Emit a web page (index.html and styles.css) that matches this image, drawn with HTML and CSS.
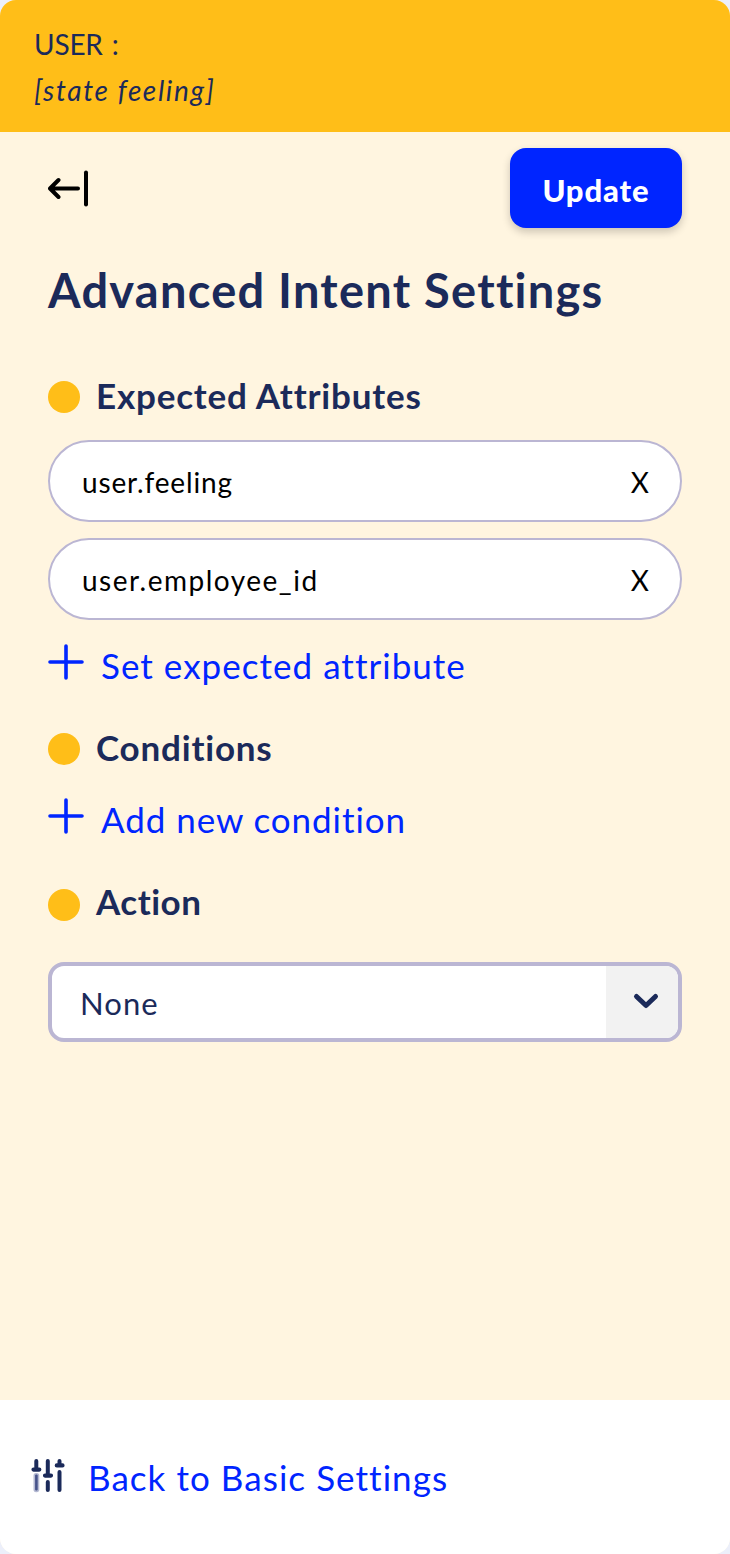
FILE: index.html
```html
<!DOCTYPE html>
<html lang="en">
<head>
<meta charset="utf-8">
<title>Advanced Intent Settings</title>
<link rel="stylesheet" href="styles.css">
</head>
<body>
<div class="panel">
  <header class="header">
    <div class="speaker">USER :</div>
    <div class="intent">[state feeling]</div>
  </header>
  <main class="main">
    <div class="toolbar">
      <svg class="back-icon" width="44" height="40" viewBox="0 0 44 40" fill="none" stroke="#000" stroke-width="4" stroke-linecap="round" stroke-linejoin="round"><path d="M30 20.5H2.5M10.5 12L2 20.5L10.5 29"/><path d="M38 4.5V36.5"/></svg>
      <button class="update">Update</button>
    </div>
    <h1 class="title">Advanced Intent Settings</h1>
    <h2 class="section attributes"><i class="dot"></i><span>Expected Attributes</span></h2>
    <div class="pills">
      <div class="pill"><span class="feeling">user.feeling</span><span>X</span></div>
      <div class="pill"><span class="employee">user.employee_id</span><span>X</span></div>
    </div>
    <a class="link set-link"><svg class="plus" width="36" height="36" viewBox="0 0 36 36" stroke="#0025ff" stroke-width="3.6" stroke-linecap="round"><path d="M18 2V34M2 18H34"/></svg><span>Set expected attribute</span></a>
    <h2 class="section conditions"><i class="dot"></i><span>Conditions</span></h2>
    <a class="link add-link"><svg class="plus" width="36" height="36" viewBox="0 0 36 36" stroke="#0025ff" stroke-width="3.6" stroke-linecap="round"><path d="M18 2V34M2 18H34"/></svg><span>Add new condition</span></a>
    <h2 class="section action"><i class="dot"></i><span>Action</span></h2>
    <div class="select">
      <span class="value">None</span>
      <span class="arrow"><svg width="28" height="20" viewBox="0 0 28 20" fill="none" stroke="#1b2a5a" stroke-width="5" stroke-linecap="round" stroke-linejoin="round"><path d="M4.5 4.5L14 13.5L23.5 4.5"/></svg></span>
    </div>
  </main>
  <footer class="footer">
    <svg class="sliders" width="34" height="36" viewBox="0 0 34 36" fill="none" stroke="#1b2a5a" stroke-width="4" stroke-linecap="round"><path d="M5.3 3V11M16.8 3V16M28.5 3V7M16.8 24V32M28.5 14V32"/><path d="M2.5 11.6H8.3M14 17.6H20M25.8 7.4H31.5" stroke-width="4.2"/><rect x="3.3" y="15.8" width="4.2" height="17.6" rx="1.8" fill="#46528a" stroke="#b4b9d2" stroke-width="1.6"/></svg>
    <span>Back to Basic Settings</span>
  </footer>
</div>
</body>
</html>
```
FILE: styles.css
```css
* { box-sizing: border-box; }
body { margin: 0; background: #eceffa; font-family: Lato, "Liberation Sans", sans-serif; color: #1b2a5a; }
.panel { width: 730px; height: 1554px; border-radius: 16px; overflow: hidden; background: #fff5e0; display: flex; flex-direction: column; white-space: nowrap; }
.header { height: 132px; background: #ffbe18; padding: 21px 34px; font-size: 28px; line-height: 46px; }
.speaker { letter-spacing: -0.2px; word-spacing: 2px; }
.intent { font-style: italic; letter-spacing: 1.65px; }
.main { flex: 1; padding: 16px 48px 0; }
.toolbar { display: flex; justify-content: space-between; align-items: center; height: 80px; }
.back-icon { display: block; }
.update { width: 172px; height: 80px; padding: 4px 0 0; border: 0; border-radius: 16px; background: #0025ff; color: #fff; font-family: inherit; font-size: 31px; font-weight: 900; line-height: 76px; letter-spacing: 0.9px; box-shadow: 0 4px 8px rgba(0, 0, 0, .2); }
.title { height: 60px; margin: 31px 0 0; font-size: 47px; line-height: 63px; font-weight: 700; letter-spacing: 1.25px; }
.section { display: flex; align-items: flex-start; gap: 16px; height: 44px; margin: 0; font-size: 35px; line-height: 47px; font-weight: 700; letter-spacing: 0.8px; }
.dot { width: 32px; height: 32px; margin-top: 9px; border-radius: 50%; background: #ffbe18; }
.attributes { margin-top: 53px; }
.pills { display: grid; gap: 16px; margin-top: 24px; }
.pill { height: 82px; border: 2px solid #bbb6d3; border-radius: 41px; background: #fff; color: #000; padding: 2px 31px 0 32px; display: flex; align-items: center; justify-content: space-between; font-size: 28px; line-height: 76px; }
.feeling { letter-spacing: 0.85px; }
.employee { letter-spacing: 1.5px; }
.link { display: flex; align-items: flex-start; gap: 17px; height: 44px; font-size: 35px; line-height: 47px; letter-spacing: 1.03px; color: #0025ff; }
.plus { margin-top: 2px; }
.set-link { margin-top: 22px; }
.conditions { margin-top: 38px; }
.add-link { margin-top: 28px; letter-spacing: 0.93px; }
.action { margin-top: 38px; letter-spacing: 0.5px; }
.action .dot { margin-top: 11px; }
.select { height: 80px; margin-top: 40px; border: 4px solid #bbb6d3; border-radius: 16px; background: #fff; display: flex; justify-content: space-between; overflow: hidden; font-size: 31px; line-height: 75px; }
.value { padding-left: 28px; letter-spacing: 1.1px; }
.arrow { width: 72px; height: 72px; background: #f2f2f2; display: flex; align-items: center; justify-content: center; padding-left: 8px; }
.footer { height: 154px; background: #fff; padding: 54px 31px 0; display: flex; align-items: flex-start; gap: 23px; font-size: 35px; line-height: 47px; letter-spacing: 1.05px; color: #0025ff; }
.sliders { margin-top: 4px; }
```
